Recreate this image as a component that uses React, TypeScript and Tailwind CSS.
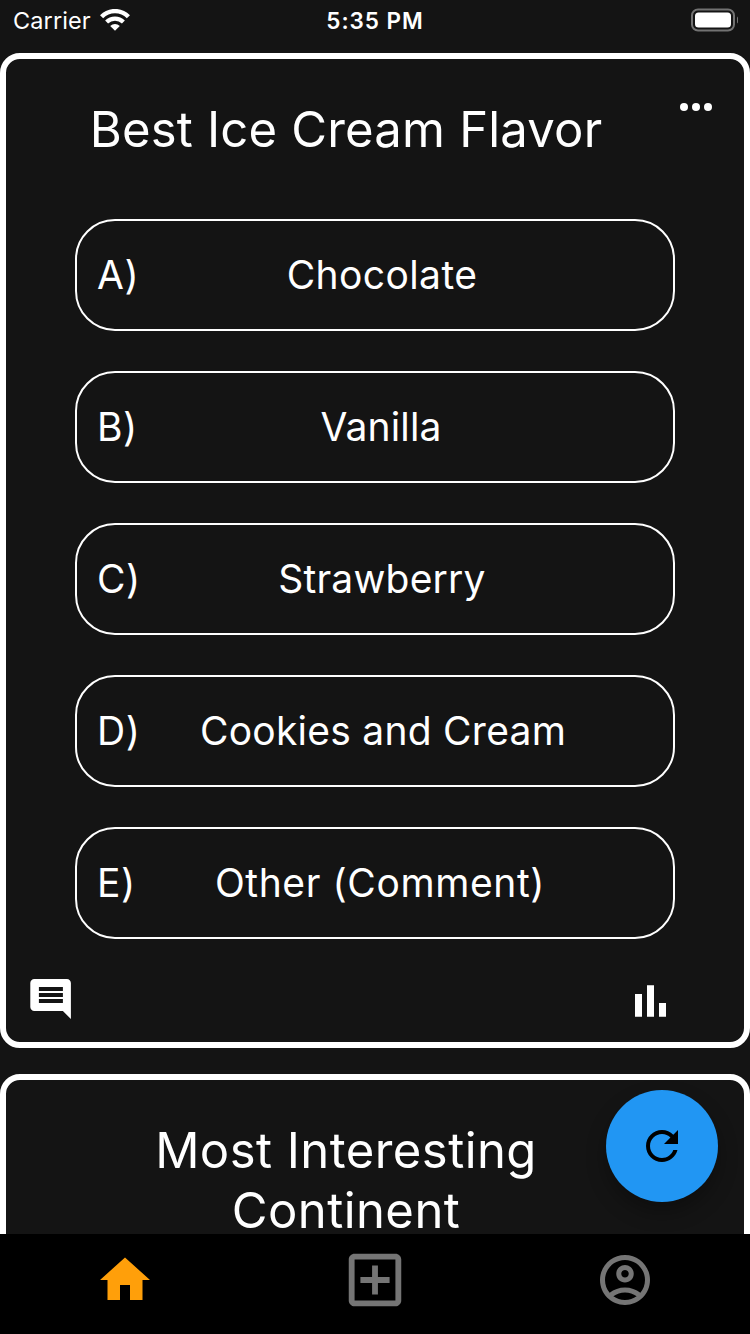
const options = [
  { label: "A)", text: "Chocolate", style: "pl-[14px] tracking-[0.4px]" },
  { label: "B)", text: "Vanilla", style: "pl-[12px] tracking-[0.15px]" },
  { label: "C)", text: "Strawberry", style: "pl-[14px] tracking-[0.2px]" },
  { label: "D)", text: "Cookies and Cream", style: "pl-[16px] tracking-[0.25px]" },
  { label: "E)", text: "Other (Comment)", style: "pl-[10px] tracking-[0.6px]" },
];

function StatusBar() {
  return (
    <header className="grid h-[53px] shrink-0 grid-cols-3 items-start px-[13px] text-white">
      <div className="flex h-[41px] items-center gap-[9px]">
        <span className="text-[23.5px] tracking-[0.1px]">Carrier</span>
        <svg width="30" height="22" viewBox="0 0 30 22" fill="none" stroke="#fff" className="mb-[1px]">
          <path d="M1.6 7.8C9 .2 21 .2 28.4 7.8" strokeWidth="4.4" />
          <path d="M6.6 13C11.3 8.4 18.7 8.4 23.4 13" strokeWidth="4.2" />
          <path d="M10.2 17c2.8-2.7 6.8-2.7 9.6 0L15 21.8z" fill="#fff" stroke="none" />
        </svg>
      </div>
      <div className="flex h-[41px] items-center justify-center text-[22.5px] font-semibold tracking-[0.95px]">
        5:35 PM
      </div>
      <div className="flex h-[39px] items-center justify-end">
        <svg width="48" height="24" viewBox="0 0 48 24" className="mr-[-1px]">
          <rect x="2" y="1.5" width="42" height="21" rx="6" fill="none" stroke="#727272" strokeWidth="2" />
          <rect x="5" y="4.5" width="36" height="15" rx="3.5" fill="#fff" />
          <path d="M47 8.5c2 1.5 2 5.500 0 7z" fill="#727272" />
        </svg>
      </div>
    </header>
  );
}

function PollCard() {
  return (
    <section className="flex h-[995px] shrink-0 flex-col rounded-[20px] border-[6px] border-white">
      <div className="flex h-[160px] justify-between">
        <h1 className="w-[666px] shrink-0 pt-[41px] pl-[14px] text-center text-[49px] leading-[60px] tracking-[0.2px]">
          Best Ice Cream Flavor
        </h1>
        <svg width="48" height="48" viewBox="0 0 24 24" fill="#fff" className="mt-[24px] mr-[24px] shrink-0">
          <circle cx="6" cy="12" r="2" />
          <circle cx="12" cy="12" r="2" />
          <circle cx="18" cy="12" r="2" />
        </svg>
      </div>
      <ul className="flex flex-col items-center gap-10">
        {options.map((o) => (
          <li
            key={o.label}
            className="grid h-[112px] w-[600px] grid-cols-[60px_1fr_60px] items-center rounded-[40px] border-2 border-white px-5 text-[39px]"
          >
            <span className="tracking-[0.6px]">{o.label}</span>
            <span className={`text-center whitespace-nowrap ${o.style}`}>{o.text}</span>
          </li>
        ))}
      </ul>
      <div className="flex items-start justify-between pt-[36px] pr-[70px] pl-[20px]">
        <svg width="48" height="48" viewBox="0 0 24 24" fill="#fff">
          <path d="M22.450 4c0-1.100-.89-2-1.990-2H4.150c-1.100 0-2 .9-2 2v12c0 1.100.9 2 2 2h14.300l4 4zM18.450 14h-12v-2h12v2zm0-3h-12V9h12v2zm0-3h-12V6h12v2z" />
        </svg>
        <svg width="48" height="48" viewBox="0 0 48 48" fill="#fff">
          <path d="M9 19h7v22.700H9zM21 10.300h7v31.400h-7zM33 28h7v13.700h-7z" />
        </svg>
      </div>
    </section>
  );
}

function NextCard() {
  return (
    <section className="mt-[26px] h-[400px] shrink-0 rounded-[20px] border-[6px] border-white pt-[41px]">
      <h2 className="w-[680px] text-center text-[49px] leading-[60px] tracking-[0.45px]">
        Most Interesting
        <br />
        Continent
      </h2>
    </section>
  );
}

function TabBar() {
  return (
    <nav className="grid h-[100px] shrink-0 grid-cols-3 place-items-center bg-black pb-2">
      <svg width="60" height="60" viewBox="0 0 24 24" fill="#ff9f0a">
        <path d="M10 20v-6h4v6h5v-8h3L12 3 2 12h3v8z" />
      </svg>
      <svg width="70" height="70" viewBox="0 0 24 24" fill="#757575">
        <path d="M19 3H5c-1.110 0-2 .9-2 2v14c0 1.100.89 2 2 2h14c1.100 0 2-.9 2-2V5c0-1.100-.9-2-2-2zm0 16H5V5h14v14zm-8-2h2v-4h4v-2h-4V7h-2v4H7v2h4z" />
      </svg>
      <svg width="60" height="60" viewBox="0 0 24 24" fill="#757575">
        <path d="M12 2C6.480 2 2 6.480 2 12s4.480 10 10 10 10-4.480 10-10S17.520 2 12 2zM7.350 18.500C8.660 17.560 10.260 17 12 17s3.340.56 4.650 1.500C15.340 19.440 13.740 20 12 20s-3.340-.56-4.650-1.500zm10.790-1.380C16.450 15.800 14.320 15 12 15s-4.450.8-6.140 2.120C4.700 15.730 4 13.950 4 12c0-4.420 3.580-8 8-8s8 3.580 8 8c0 1.950-.7 3.730-1.860 5.120z" />
        <path d="M12 6c-1.930 0-3.500 1.570-3.500 3.500S10.070 13 12 13s3.500-1.570 3.500-3.500S13.930 6 12 6zm0 5c-.83 0-1.500-.67-1.500-1.500S11.170 8 12 8s1.500.67 1.500 1.500S12.830 11 12 11z" />
      </svg>
    </nav>
  );
}

export default function App() {
  return (
    <div className="relative flex h-[1334px] w-[750px] flex-col overflow-hidden bg-[#141414] font-['Inter','Liberation_Sans',sans-serif] text-white">
      <StatusBar />
      <main className="flex min-h-0 flex-1 flex-col overflow-hidden">
        <PollCard />
        <NextCard />
      </main>
      <TabBar />
      <button
        aria-label="Refresh"
        className="absolute top-[1090px] left-[606px] flex size-[112px] items-center justify-center rounded-full bg-[#2196f3] shadow-[0_10px_20px_rgba(0,0,0,0.3)]"
      >
        <svg width="48" height="48" viewBox="0 0 24 24" fill="#000">
          <path d="M17.650 6.350C16.200 4.900 14.210 4 12 4c-4.420 0-7.990 3.580-7.990 8s3.570 8 7.990 8c3.730 0 6.840-2.550 7.730-6h-2.080c-.82 2.330-3.040 4-5.650 4-3.310 0-6-2.690-6-6s2.690-6 6-6c1.660 0 3.140.69 4.220 1.780L13 11h7V4l-2.350 2.350z" />
        </svg>
      </button>
    </div>
  );
}
